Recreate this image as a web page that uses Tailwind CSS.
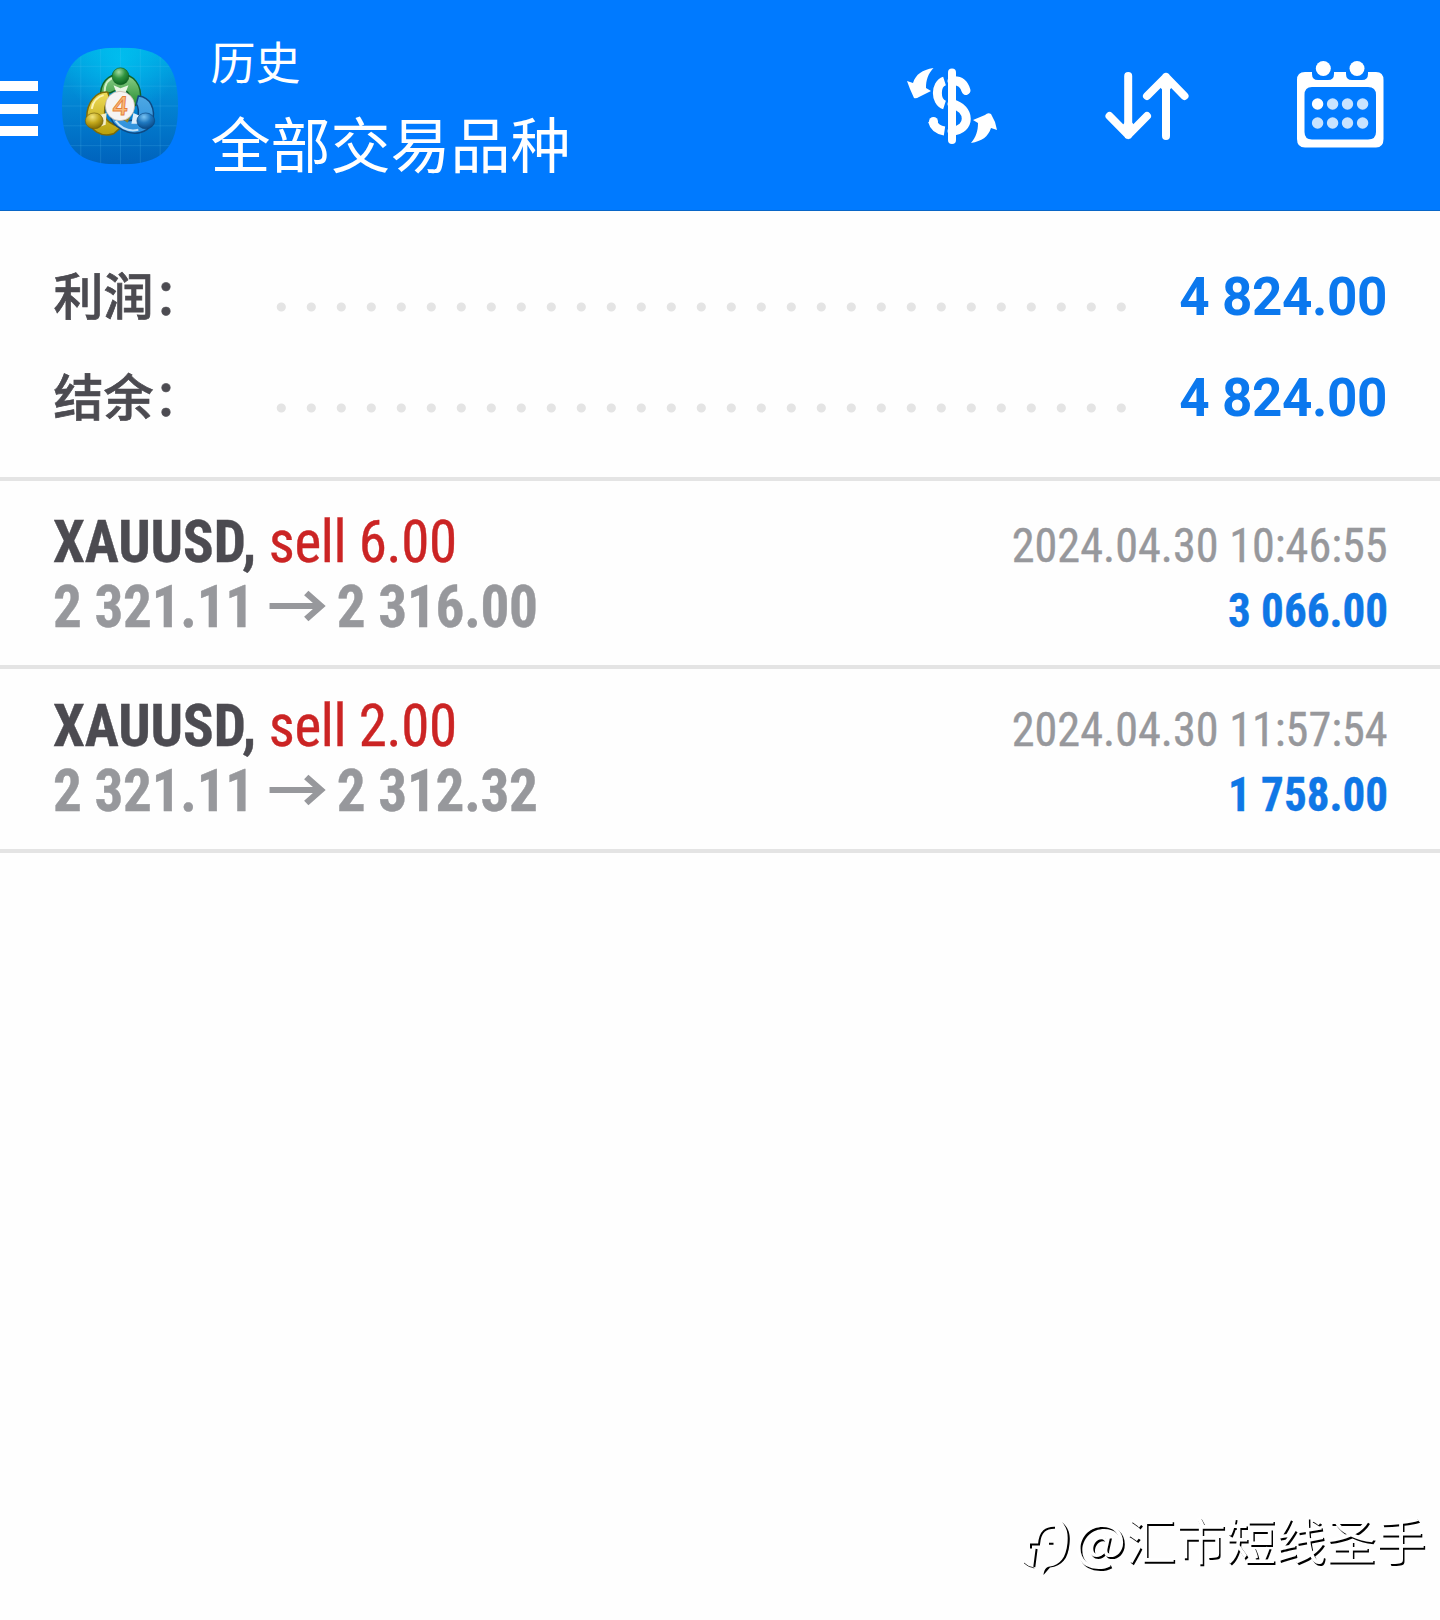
<!DOCTYPE html>
<html lang="zh-CN">
  <head>
    <meta charset="UTF-8" />
    <meta name="viewport" content="width=device-width, initial-scale=1.0" />
    <title>历史</title>
    <script src="https://cdn.jsdelivr.net/npm/@tailwindcss/browser@4"></script>
  </head>
  <body class="bg-[#fefefe] font-['Roboto','Noto_Sans_CJK_SC',sans-serif]">
    <div class="w-[1440px] h-[1620px] flex flex-col overflow-hidden">
      <!-- Header -->
      <header class="h-[211px] shrink-0 bg-[#007aff] border-b border-[#0866c8] flex items-start">
        <!-- Menu -->
        <button class="mt-[81px] flex flex-col gap-[12.5px]" aria-label="menu">
          <span class="block w-[38px] h-[10px] bg-white"></span>
          <span class="block w-[38px] h-[10px] bg-white"></span>
          <span class="block w-[38px] h-[10px] bg-white"></span>
        </button>

        <!-- App icon -->
        <svg class="mt-[47px] ml-[23.500px] w-[117px] h-[118px]" viewBox="0 0 118 118">
          <defs>
            <linearGradient id="bg" x1="0" y1="0" x2="0" y2="1">
              <stop offset="0" stop-color="#00aae4" />
              <stop offset="0.5" stop-color="#0282d2" />
              <stop offset="1" stop-color="#0062bc" />
            </linearGradient>
            <radialGradient id="glow" cx="0.5" cy="0.1" r="0.5">
              <stop offset="0" stop-color="#00c8f4" stop-opacity="0.7" />
              <stop offset="1" stop-color="#00c8f4" stop-opacity="0" />
            </radialGradient>
            <linearGradient id="green" x1="0" y1="0" x2="0" y2="1">
              <stop offset="0" stop-color="#8ed08a" />
              <stop offset="1" stop-color="#1f8a2c" />
            </linearGradient>
            <radialGradient id="green-head" cx="0.4" cy="0.25" r="0.75">
              <stop offset="0" stop-color="#a5dca0" />
              <stop offset="0.5" stop-color="#2f9440" />
              <stop offset="1" stop-color="#0c6420" />
            </radialGradient>
            <linearGradient id="yellow" x1="0" y1="0" x2="0" y2="1">
              <stop offset="0" stop-color="#f0dc58" />
              <stop offset="1" stop-color="#b8a00c" />
            </linearGradient>
            <radialGradient id="yellow-head" cx="0.4" cy="0.25" r="0.75">
              <stop offset="0" stop-color="#f2e47c" />
              <stop offset="0.5" stop-color="#c3a81c" />
              <stop offset="1" stop-color="#826c04" />
            </radialGradient>
            <linearGradient id="blue" x1="0" y1="0" x2="0" y2="1">
              <stop offset="0" stop-color="#4ea8e4" />
              <stop offset="1" stop-color="#2b8fdc" />
            </linearGradient>
            <radialGradient id="blue-head" cx="0.4" cy="0.25" r="0.75">
              <stop offset="0" stop-color="#7cc4f2" />
              <stop offset="0.5" stop-color="#1f78c0" />
              <stop offset="1" stop-color="#0a4a88" />
            </radialGradient>
            <clipPath id="squircle">
              <path d="M58.500 0C101 0 117 16 117 59S101 118 58.500 118 0 102 0 59 16 0 58.500 0Z" />
            </clipPath>
          </defs>
          <g clip-path="url(#squircle)">
            <rect width="117" height="118" fill="url(#bg)" />
            <rect width="117" height="118" fill="url(#glow)" />
            <path
              d="M19 0V118M39 0V118M59 0V118M79 0V118M99 0V118M0 19H117M0 39H117M0 59H117M0 79H117M0 99H117"
              stroke="#5cc8f4"
              stroke-opacity="0.2"
              stroke-width="1"
            />
          </g>
          <!-- Green figure -->
          <path d="M39 50C38 36 46 27 59 27S81 37 79 54L72 60C70 48 66 42 59 42S51 46 47 46Z" fill="url(#green)" stroke="#146324" stroke-width="1.500" />
          <path d="M43 45C43 35 48 31 54 30" stroke="#d0f0cc" stroke-width="2" fill="none" />
          <path d="M52 38L59 41L67 38L64 46H55Z" fill="#e8f5e4" />
          <!-- Yellow figure -->
          <path d="M46 45C34 44 25 56 25 70C28 84 40 91 52 87L60 80C50 78 42 73 43 64C43 58 45 54 48 51Z" fill="url(#yellow)" stroke="#7c6a08" stroke-width="1.500" />
          <path d="M30 62C31 55 35 50 42 48" stroke="#fbf3b4" stroke-width="2" fill="none" />
          <path d="M38 68L45 66L44 78L38 80Z" fill="#f4efc8" />
          <!-- Blue figure -->
          <path d="M77 49C89 50 95 62 91 76C86 87 72 89 61 83C53 79 49 74 49 68C60 74 70 77 76 70C78 66 77 60 75 57Z" fill="url(#blue)" stroke="#0d4a84" stroke-width="1.500" />
          <path d="M54 74C60 82 68 85 77 83" stroke="#bfe2fa" stroke-width="2" fill="none" />
          <path d="M72 66L79 69L78 77L70 77Z" fill="#dceefb" />
          <path d="M60 71L69 70L66 76Z" fill="#8f8428" />
          <circle cx="59" cy="29" r="8.500" fill="url(#green-head)" stroke="#0e5a20" stroke-width="0.600" />
          <ellipse cx="32.500" cy="74" rx="9" ry="8" fill="url(#yellow-head)" stroke="#6e5c08" stroke-width="0.600" />
          <ellipse cx="84.500" cy="74" rx="9" ry="8" fill="url(#blue-head)" stroke="#0b437a" stroke-width="0.600" />
          <circle cx="58.500" cy="59" r="14.800" fill="#f6f4f4" stroke="#b9a58c" stroke-width="0.600" />
          <text x="58" y="68" text-anchor="middle" font-family="Open Sans, sans-serif" font-weight="600" font-size="26" fill="#f9b978" stroke="#e5803a" stroke-width="0.900" transform="translate(6 0) skewX(-5)">4</text>
        </svg>

        <!-- Title -->
        <div class="ml-[32px] mt-[33px] flex flex-col text-white">
          <span class="text-[45px] leading-[64px]">历史</span>
          <span class="text-[60px] leading-[90px] mt-[6px]">全部交易品种</span>
        </div>

        <!-- Toolbar -->
        <div class="ml-auto flex pt-[50px] pr-10">
          <svg class="w-[120px] h-[110px] mr-20" viewBox="0 0 120 110" fill="none">
            <path d="M43.500 18C32 20 26 24 23 33L17 31L20 39L24 48Q26 49 29 47L41 41L36 38C36 30 38 24 43.500 18Z" fill="#fff" />
            <path d="M81 93C92 91 98 87 101 78L107 80L105 72L101 64Q98 62 95 65L83 70L88 73C88 81 86 87 81 93Z" fill="#fff" />
            <path d="M54.500 31C45 34 45 52 54.500 55M42.500 71C44 77 48 80 54.500 81" stroke="#fff" stroke-width="9" />
            <circle cx="43.500" cy="71.500" r="4.500" fill="#fff" />
            <path d="M62 22.500V90" stroke="#fff" stroke-width="8" stroke-linecap="round" />
            <path d="M62 31C70 30 74 34 76 40.500M62 54C81 58 81 80 62 81" stroke="#fff" stroke-width="9" stroke-linecap="round" />
          </svg>
          <svg class="w-[120px] h-[110px] mr-[70px]" viewBox="0 0 120 110" fill="none">
            <path
              d="M38.200 26V85M19.500 66L38.200 85L57 66M76 86V27M57 46L76 27L94.500 46"
              stroke="#fff"
              stroke-width="8"
              stroke-linecap="round"
              stroke-linejoin="round"
            />
            <path d="M32 76L38.200 68L45 76L38.200 85ZM69 36L76 28L83 36L76 44Z" fill="#fff" />
          </svg>
          <svg class="w-[120px] h-[110px]" viewBox="0 0 120 110">
            <path
              fill="#fff"
              fill-rule="evenodd"
              d="M25 22H32V24Q32 30 38 30H48Q54 30 54 24V22H66V24Q66 30 72 30H82Q88 30 88 24V22H96Q103.500 22 103.500 30V89Q103.500 97.500 96 97.500H25Q17 97.500 17 89V30Q17 22 25 22ZM32 37Q24.500 37 24.500 45V82Q24.500 89.500 32 89.500H88Q96 89.500 96 82V45Q96 37 88 37Z"
            />
            <circle cx="43.300" cy="18.500" r="7.500" fill="#fff" />
            <circle cx="77" cy="18.500" r="7.500" fill="#fff" />
            <circle cx="37.600" cy="54" r="5.700" fill="#fff" />
            <g fill="#c8e3ff">
              <circle cx="52.600" cy="54" r="5.700" />
              <circle cx="67.500" cy="54" r="5.700" />
              <circle cx="82.600" cy="54" r="5.700" />
              <circle cx="37.600" cy="73" r="5.700" />
              <circle cx="52.600" cy="73" r="5.700" />
              <circle cx="67.500" cy="73" r="5.700" />
              <circle cx="82.600" cy="73" r="5.700" />
            </g>
          </svg>
        </div>
      </header>

      <!-- Summary -->
      <section class="h-[270px] shrink-0 border-b-4 border-[#e4e4e4] pt-[36px] pl-[53.5px] pr-[53px]">
        <div class="h-[101px] flex items-center">
          <span class="w-[222.5px] pt-px text-[50px] font-medium text-[#4c4b51] [-webkit-text-stroke:0.7px_#4c4b51]">利润：</span>
          <svg class="w-[852px] h-[10px] mt-[18px]" viewBox="0 0 852 10">
            <path d="M5.300 5H846" stroke="#e4e4e4" stroke-width="9.200" stroke-linecap="round" stroke-dasharray="0 30" />
          </svg>
          <span class="ml-auto text-[53px] tracking-[-0.4px] font-bold text-[#0b78ee]">4 824.00</span>
        </div>
        <div class="h-[101px] flex items-center">
          <span class="w-[222.5px] pt-px text-[50px] font-medium text-[#4c4b51] [-webkit-text-stroke:0.7px_#4c4b51]">结余：</span>
          <svg class="w-[852px] h-[10px] mt-[18px]" viewBox="0 0 852 10">
            <path d="M5.300 5H846" stroke="#e4e4e4" stroke-width="9.200" stroke-linecap="round" stroke-dasharray="0 30" />
          </svg>
          <span class="ml-auto text-[53px] tracking-[-0.4px] font-bold text-[#0b78ee]">4 824.00</span>
        </div>
      </section>

      <!-- Deals -->
      <ul class="flex flex-col font-['Roboto_Condensed','Roboto',sans-serif] [font-stretch:75%]">
        <li class="h-[188px] border-b-4 border-[#e4e4e4] pt-[28px] pl-[53px] pr-[52px] flex justify-between">
          <div class="flex flex-col items-start">
            <p class="text-[60px] leading-[65px] text-[#cb2424] origin-left scale-x-[0.949] tracking-[-0.4px] [-webkit-text-stroke:0.4px_currentColor]"><b class="text-[#4c4b51] tracking-[-0.1px]">XAUUSD,</b> sell 6.00</p>
            <p class="text-[60px] leading-[65px] font-bold text-[#97989c] flex items-center origin-left scale-x-[0.953] tracking-[-0.3px] [-webkit-text-stroke:0.4px_currentColor]">
              <span>2 321.11</span>
              <svg class="w-[62px] h-[34px] ml-[16px] mr-[9px]" viewBox="0 0 56 34" fill="none" preserveAspectRatio="none">
                <path d="M0 16H49M35 3L49 16L35 29" stroke="#97989c" stroke-width="6" />
              </svg>
              <span>2 316.00</span>
            </p>
          </div>
          <div class="flex flex-col items-end pt-1">
            <time class="text-[49px] leading-[65px] text-[#97989c] origin-right scale-x-[0.943] [-webkit-text-stroke:0.4px_currentColor]">2024.04.30 10:46:55</time>
            <span class="text-[49px] leading-[65px] font-bold text-[#0f77e6] origin-right scale-x-[0.92] [-webkit-text-stroke:0.4px_currentColor]">3 066.00</span>
          </div>
        </li>
        <li class="h-[184px] border-b-4 border-[#e4e4e4] pt-[24px] pl-[53px] pr-[52px] flex justify-between">
          <div class="flex flex-col items-start">
            <p class="text-[60px] leading-[65px] text-[#cb2424] origin-left scale-x-[0.949] tracking-[-0.4px] [-webkit-text-stroke:0.4px_currentColor]"><b class="text-[#4c4b51] tracking-[-0.1px]">XAUUSD,</b> sell 2.00</p>
            <p class="text-[60px] leading-[65px] font-bold text-[#97989c] flex items-center origin-left scale-x-[0.953] tracking-[-0.3px] [-webkit-text-stroke:0.4px_currentColor]">
              <span>2 321.11</span>
              <svg class="w-[62px] h-[34px] ml-[16px] mr-[9px]" viewBox="0 0 56 34" fill="none" preserveAspectRatio="none">
                <path d="M0 16H49M35 3L49 16L35 29" stroke="#97989c" stroke-width="6" />
              </svg>
              <span>2 312.32</span>
            </p>
          </div>
          <div class="flex flex-col items-end pt-1">
            <time class="text-[49px] leading-[65px] text-[#97989c] origin-right scale-x-[0.943] [-webkit-text-stroke:0.4px_currentColor]">2024.04.30 11:57:54</time>
            <span class="text-[49px] leading-[65px] font-bold text-[#0f77e6] origin-right scale-x-[0.92] [-webkit-text-stroke:0.4px_currentColor]">1 758.00</span>
          </div>
        </li>
      </ul>

      <!-- Watermark -->
      <footer class="mt-auto mb-[41px] pr-[14px] flex items-center justify-end">
        <svg class="w-[52px] h-[58px] mt-[20px] mr-[5px]" viewBox="0 0 52 58" fill="none">
          <path d="M33 6.700C24 6.500 18 10 17 23.500H9V27.500M14.600 28L12.300 46M27 22.700H31.500" stroke="#000" stroke-width="2" />
          <path d="M2 42Q6 46 12.300 47" stroke="#444" stroke-width="1" />
          <path d="M40 1C49 9 48 17 47.500 23C46 38 40 45 28 46.500L21.500 54C22 49 24 46 28 45.500C38 44 44 37 45.500 22C46 14 46 8 40 1Z" fill="#000" />
        </svg>
        <span class="text-[50px] leading-[74px] pb-1 text-white font-['Noto_Sans_CJK_SC',sans-serif] [text-shadow:1.5px_1.5px_0_#000]"><span class="inline-block origin-right scale-x-[1.11]">@</span>汇市短线圣手</span>
      </footer>
    </div>
  </body>
</html>
